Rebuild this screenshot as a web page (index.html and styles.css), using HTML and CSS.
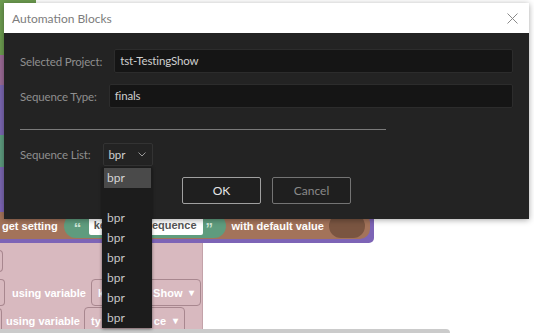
FILE: index.html
```html
<!DOCTYPE html>
<html lang="en">

<head>
    <meta charset="UTF-8">
    <title>Automation Blocks</title>
    <link rel="stylesheet" href="styles.css">
</head>

<body>
    <!-- Blockly workspace behind the dialog -->
    <div class="workspace">
        <div class="blk blk-top"></div>
        <div class="blk blk-strip"></div>

        <div class="blk setting-wrap">
            <div class="setting">
                <span class="blk-text">get setting</span>
                <span class="str-pill">
                    <span class="quote">&ldquo;</span>
                    <span class="str-field"><span>ke</span><span class="hid" style="width: 46px"></span><span>equence</span></span>
                    <span class="quote">&rdquo;</span>
                </span>
                <span class="blk-text default">with default value</span>
                <span class="slot"></span>
            </div>
        </div>

        <div class="blk pink">
            <div class="pink-row row-a">
                <span class="field stub"></span>
            </div>
            <div class="pink-row row-b">
                <span class="field stub"></span>
                <span class="blk-text">using variable</span>
                <span class="field var"><span>k</span><span class="hid" style="width: 49px"></span><span>Show</span><span class="tri">&#9662;</span></span>
            </div>
            <div class="pink-row row-c">
                <span class="field stub"></span>
                <span class="blk-text">using variable</span>
                <span class="field var"><span>ty</span><span class="hid" style="width: 53px"></span><span>ce</span><span class="tri">&#9662;</span></span>
            </div>
        </div>

        <div class="blk scrollbar"></div>
    </div>

    <!-- Dialog -->
    <div class="dialog">
        <div class="title-bar">
            <span>Automation Blocks</span>
            <svg class="close" width="11" height="11" viewBox="0 0 11 11">
                <path d="M0.5 0.5 L10.5 10.5 M10.5 0.5 L0.5 10.5" stroke="#8a8a8a" stroke-width="1" fill="none" />
            </svg>
        </div>
        <div class="dialog-body">
            <div class="form-row">
                <label>Selected Project:</label>
                <div class="text-input">tst-TestingShow</div>
            </div>
            <div class="form-row">
                <label>Sequence Type:</label>
                <div class="text-input">finals</div>
            </div>
            <hr class="divider">
            <div class="form-row">
                <label>Sequence List:</label>
                <div class="select">
                    <span>bpr</span>
                    <svg width="8" height="5" viewBox="0 0 8 5">
                        <path d="M0.5 0.5 L4 4 L7.5 0.5" stroke="#9a9a9a" stroke-width="1" fill="none" />
                    </svg>
                </div>
            </div>
            <div class="buttons">
                <button class="btn btn-ok">OK</button>
                <button class="btn btn-cancel">Cancel</button>
            </div>
        </div>
    </div>

    <!-- Open select list -->
    <ul class="dropdown">
        <li class="selected">bpr</li>
        <li></li>
        <li>bpr</li>
        <li>bpr</li>
        <li>bpr</li>
        <li>bpr</li>
        <li>bpr</li>
        <li>bpr</li>
    </ul>
</body>

</html>
```

FILE: styles.css
```css
body {
    margin: 0;
    width: 534px;
    height: 333px;
    overflow: hidden;
    position: relative;
    background-color: #fff;
    font-family: Lato, "Open Sans", sans-serif;
}

/* ---------- workspace ---------- */

.workspace {
    position: absolute;
    inset: 0;
}

.blk {
    position: absolute;
}

.blk-top {
    left: 0;
    top: 0;
    width: 36px;
    height: 55px;
    background-color: #6c9b4f;
}

.blk-strip {
    left: 0;
    top: 55px;
    width: 8px;
    height: 160px;
    background: linear-gradient(#9a6a95 0 30px, #7a66b0 30px 80px, #5d9a7e 80px 112px, #7a66b0 112px);
}

.blk-text {
    font-family: "Liberation Sans", Arial, sans-serif;
    font-weight: bold;
    font-size: 11px;
    color: #fff;
    white-space: nowrap;
}

.hid {
    display: inline-block;
}

.setting-wrap {
    left: -10px;
    top: 204px;
    width: 384px;
    height: 39px;
    background-color: #7d64b6;
    border-radius: 0 0 5px 0;
}

.setting {
    position: absolute;
    left: 0;
    top: 8px;
    width: 380px;
    height: 27px;
    background-color: #a3735a;
    border-radius: 0 10px 10px 0;
    display: flex;
    align-items: center;
    padding-left: 12px;
    box-sizing: border-box;
}

.str-pill {
    display: flex;
    align-items: center;
    height: 24px;
    margin-left: 6px;
    padding: 0 12px 0 10px;
    background-color: #5f9c7e;
    border-radius: 12px;
    font-family: "Liberation Sans", Arial, sans-serif;
    font-weight: bold;
}

.quote {
    color: #cfe5d8;
    font-size: 15px;
    line-height: 15px;
    height: 12px;
    width: 8px;
}

.str-field {
    display: flex;
    background-color: #fff;
    color: #555;
    font-size: 11px;
    height: 19px;
    line-height: 19px;
    padding: 0 6px 0 5px;
    margin: 0 3px 0 7px;
    border-radius: 2px;
}

.default {
    margin-left: 6px;
}

.slot {
    width: 36px;
    height: 24px;
    margin-left: 5px;
    border-radius: 12px;
    background-color: #7a5541;
}

.pink {
    left: -6px;
    top: 243px;
    width: 208px;
    height: 90px;
    background-color: #d8b9bf;
    border-right: 1px solid #c3a2a9;
}

.pink-row {
    position: absolute;
    left: 0;
    display: flex;
    align-items: center;
}

.field {
    border: 1px solid #a8878f;
    border-radius: 4px;
    box-sizing: border-box;
    font-family: "Liberation Sans", Arial, sans-serif;
    font-weight: bold;
    font-size: 11px;
    color: #fff;
    white-space: nowrap;
}

.stub {
    width: 9px;
    height: 22px;
    border-left: none;
    border-radius: 0 4px 4px 0;
}

.row-a {
    top: 7px;
}

.row-b {
    top: 36px;
}

.row-b .stub {
    height: 27px;
    width: 11px;
    margin-right: 7px;
}

.row-b .var {
    margin-left: 5px;
}

.row-c {
    top: 64px;
}

.row-c .stub {
    width: 8px;
    height: 26px;
    margin-right: 4px;
}

.row-c .var {
    margin-left: 4px;
}

.var {
    display: flex;
    align-items: center;
    height: 27px;
    padding: 0 6px;
}

.tri {
    font-size: 10px;
    margin-left: 7px;
}

.scrollbar {
    left: 0;
    top: 329px;
    width: 450px;
    height: 8px;
    background-color: #cbcbcb;
    border-radius: 0 4px 0 0;
}

/* ---------- dialog ---------- */

.dialog {
    position: absolute;
    left: 4px;
    top: 3px;
    width: 525px;
    box-shadow: 0 1px 6px rgba(0, 0, 0, 0.35);
}

.title-bar {
    height: 30px;
    background-color: #fff;
    display: flex;
    justify-content: space-between;
    align-items: center;
    padding: 0 11px 0 8px;
    font-size: 12px;
    color: #7c7c7c;
}

.close {
    display: block;
}

.dialog-body {
    background-color: #232323;
    padding: 16px 16px 15px 16px;
    font-size: 11.5px;
    letter-spacing: -0.15px;
}

.form-row {
    display: flex;
    align-items: center;
    gap: 12px;
    margin-bottom: 11px;
}

.form-row label {
    color: #8f8f8f;
    white-space: nowrap;
}

.text-input {
    flex: 1;
    height: 24px;
    line-height: 22px;
    box-sizing: border-box;
    background-color: #151515;
    border: 1px solid #2c2c2c;
    border-radius: 2px;
    padding-left: 5px;
    color: #cfcfcf;
}

.divider {
    width: 366px;
    margin: 21px 0 13px 0;
    border: none;
    border-top: 1px solid #7a7a7a;
}

.select {
    width: 50px;
    height: 23px;
    box-sizing: border-box;
    border: 1px solid #333;
    border-radius: 2px;
    display: flex;
    align-items: center;
    justify-content: space-between;
    padding: 0 6px 0 5px;
    color: #cfcfcf;
}

.form-row:last-of-type {
    margin-bottom: 0;
}

.buttons {
    display: flex;
    justify-content: center;
    gap: 11px;
    margin-top: 11px;
}

.btn {
    width: 79px;
    height: 27px;
    background-color: #1f1f1f;
    border-radius: 2px;
    font-family: Lato, "Open Sans", sans-serif;
    font-size: 12px;
}

.btn-ok {
    border: 1px solid #a0a0a0;
    color: #e6e6e6;
}

.btn-cancel {
    border: 1px solid #747474;
    color: #8a8a8a;
}

/* ---------- dropdown list ---------- */

.dropdown {
    position: absolute;
    left: 102px;
    top: 167px;
    width: 50px;
    height: 161px;
    box-sizing: border-box;
    margin: 0;
    padding: 1px 1px 0 2px;
    list-style: none;
    background-color: #1c1c1c;
    box-shadow: 0 1px 3px rgba(0, 0, 0, 0.5);
    font-size: 12px;
    color: #c6c6c6;
}

.dropdown li {
    height: 20px;
    line-height: 19px;
    padding-left: 3px;
}

.dropdown li.selected {
    background-color: #4a4a4a;
    color: #d4d4d4;
}
```
